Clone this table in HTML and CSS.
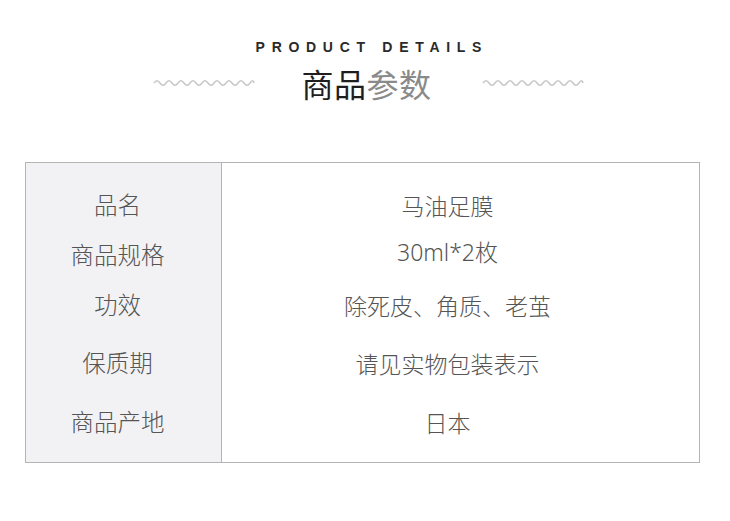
FILE: index.html
```html
<!DOCTYPE html>
<html lang="zh">
<head>
<meta charset="utf-8">
<link rel="stylesheet" href="styles.css">
</head>
<body>
<div class="page">
  <header class="head">
    <div class="en">PRODUCT DETAILS</div>
    <div class="title-row">
      <svg class="wave" width="102" height="10" viewBox="0 0 102 10">
        <path d="M1 5 Q4 0.5 7 5 T13 5 T19 5 T25 5 T31 5 T37 5 T43 5 T49 5 T55 5 T61 5 T67 5 T73 5 T79 5 T85 5 T91 5 T97 5 T101 5" fill="none" stroke="#c8c8c8" stroke-width="1.6"/>
      </svg>
      <h1 class="title"><span class="dark">商品</span><span class="light">参数</span></h1>
      <svg class="wave" width="102" height="10" viewBox="0 0 102 10">
        <path d="M1 5 Q4 0.5 7 5 T13 5 T19 5 T25 5 T31 5 T37 5 T43 5 T49 5 T55 5 T61 5 T67 5 T73 5 T79 5 T85 5 T91 5 T97 5 T101 5" fill="none" stroke="#c8c8c8" stroke-width="1.6"/>
      </svg>
    </div>
  </header>
  <div class="table">
    <div class="labels">
      <div class="cell r1">品名</div>
      <div class="cell r2">商品规格</div>
      <div class="cell r3">功效</div>
      <div class="cell r4">保质期</div>
      <div class="cell r5">商品产地</div>
    </div>
    <div class="values">
      <div class="cell r1">马油足膜</div>
      <div class="cell r2 num">30ml*2枚</div>
      <div class="cell r3">除死皮、角质、老茧</div>
      <div class="cell r4">请见实物包装表示</div>
      <div class="cell r5">日本</div>
    </div>
  </div>
</div>
</body>
</html>
```
FILE: styles.css
```css
* { box-sizing: border-box; }
html, body { margin: 0; padding: 0; background: #fff; }
body {
  width: 730px;
  height: 521px;
  overflow: hidden;
  font-family: "Noto Sans CJK SC", "Noto Sans", sans-serif;
}
.page { padding-top: 38px; }
.head {
  display: flex;
  flex-direction: column;
  align-items: center;
  padding-left: 7px;
}
.en {
  font-family: "Liberation Sans", Arial, sans-serif;
  font-weight: bold;
  font-size: 14px;
  line-height: 18px;
  letter-spacing: 6.7px;
  margin-right: -6.7px;
  color: #2a2a2a;
}
.title-row {
  display: flex;
  align-items: center;
  gap: 46px;
  margin-top: 4px;
}
.title-row .wave:last-child { margin-left: 4px; }
.title {
  margin: 0;
  font-weight: normal;
  font-size: 32px;
  line-height: 46px;
  letter-spacing: 0.5px;
}
.dark { color: #1e1e1e; }
.light { color: #8a8a8a; }

.table {
  margin: 56px 0 0 25px;
  width: 675px;
  height: 301px;
  border: 1px solid #b4b4b4;
  display: flex;
}
.labels {
  width: 196px;
  background: #f2f2f4;
  border-right: 1px solid #b4b4b4;
  padding: 17px 12px 0 0;
}
.values {
  flex: 1;
  padding: 17px 26px 0 0;
}
.cell {
  display: flex;
  align-items: center;
  justify-content: center;
  font-size: 23.5px;
  font-weight: 300;
  color: #555;
  line-height: 1;
}
.values .cell { font-size: 23px; }
.num { font-family: "Noto Sans", "Noto Sans CJK SC", sans-serif; font-weight: 300; padding-bottom: 5px; }
.r1 { height: 50px; }
.r2 { height: 49px; }
.r3 { height: 52px; }
.r4 { height: 64px; }
.r5 { height: 54px; }
```
